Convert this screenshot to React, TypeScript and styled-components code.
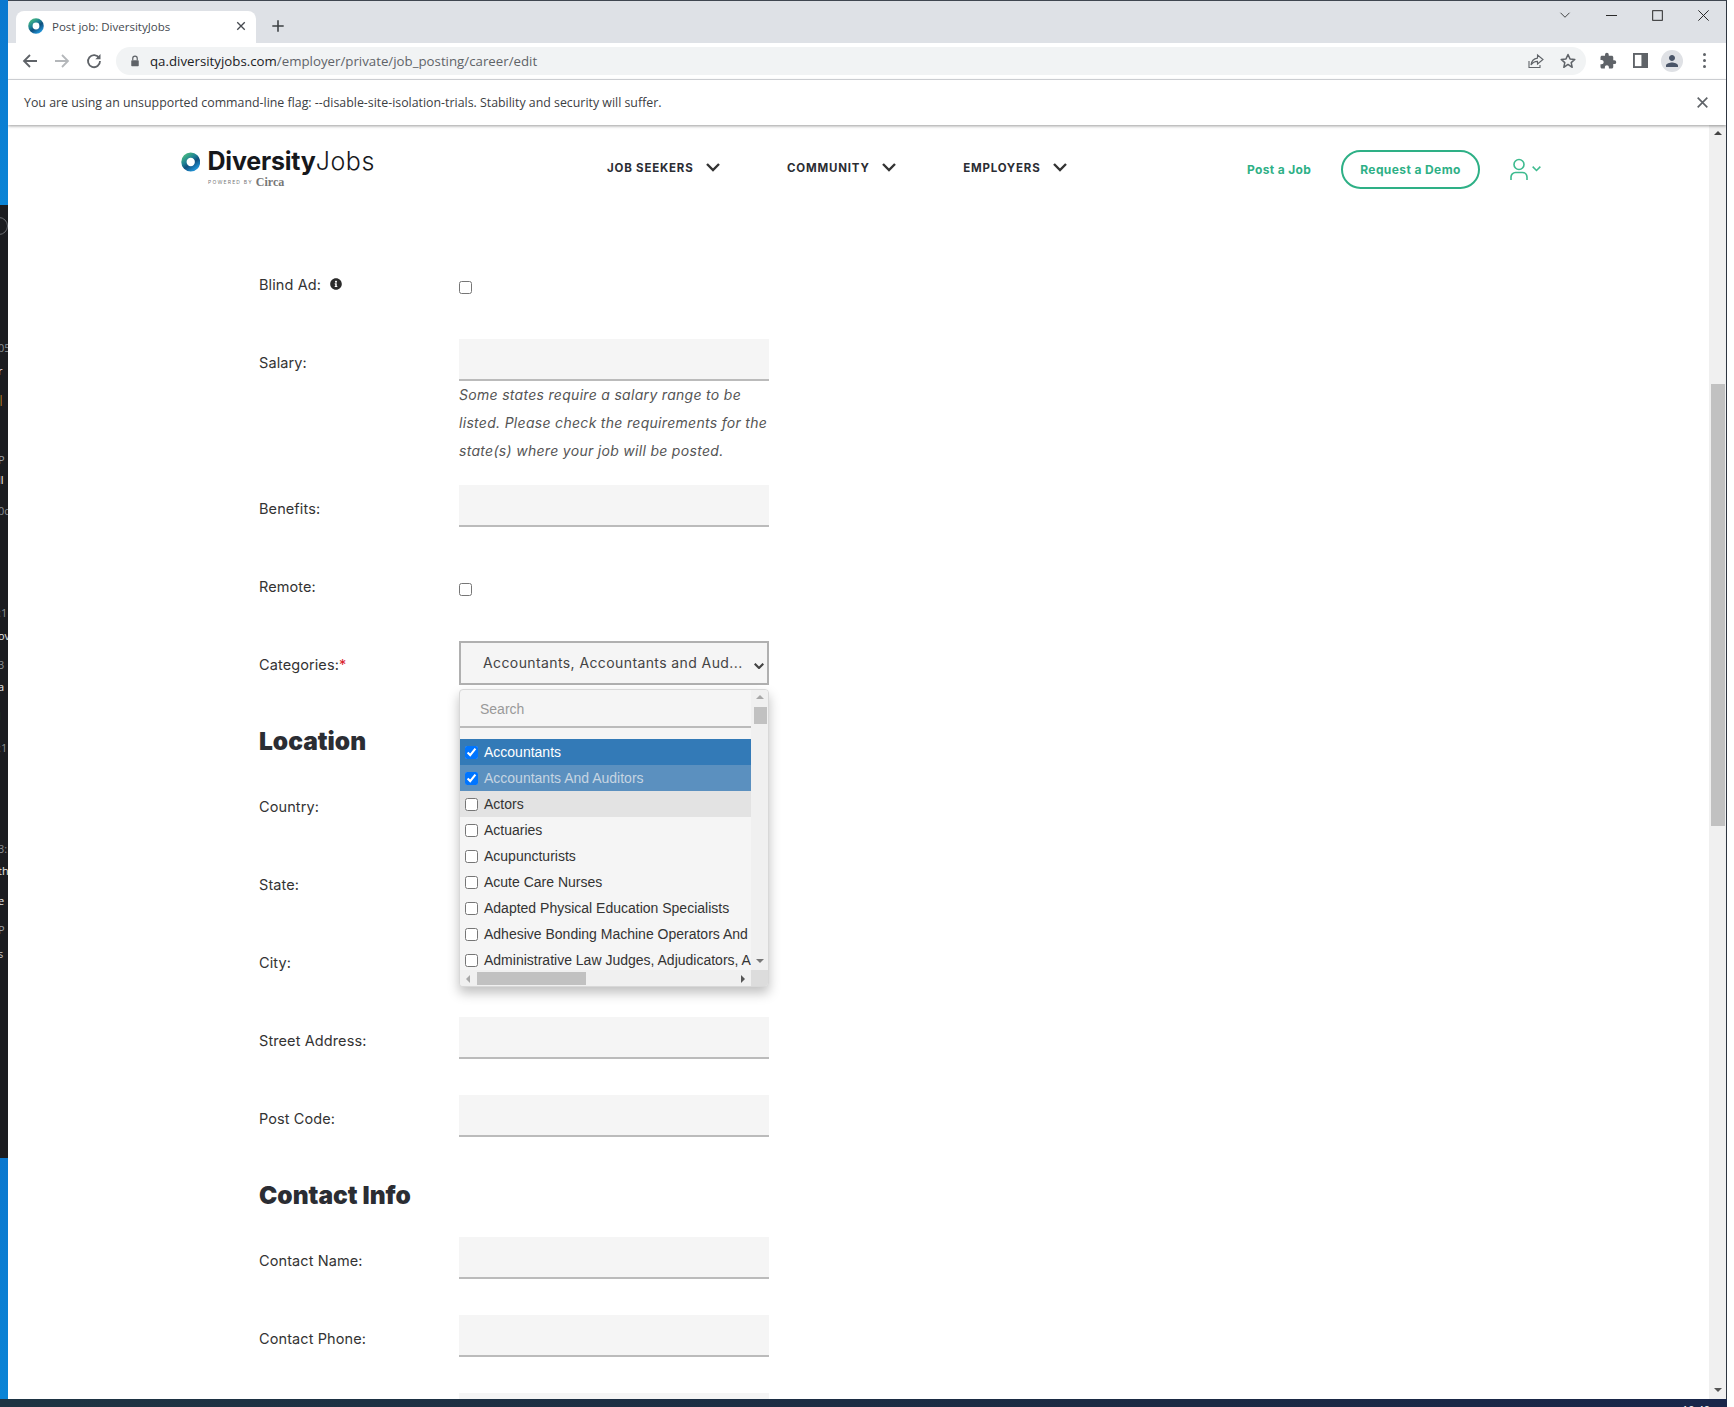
import styled, { createGlobalStyle } from "styled-components";
import { FaInfoCircle } from "react-icons/fa";
import { MdExtension, MdPerson } from "react-icons/md";

const GlobalStyle = createGlobalStyle`
  html, body {
    margin: 0;
    padding: 0;
    background: #fff;
  }
`;

const chromeFont = `"Open Sans", "Noto Sans", sans-serif`;
const pageFont = `Inter, "Open Sans", sans-serif`;
const listFont = `"Liberation Sans", Arial, sans-serif`;

const stripBits = [
  { text: "05", top: 107, color: "#8a8f94" },
  { text: "r", top: 11, color: "#e8e8e8" },
  { text: "|", top: 16, color: "#d29922" },
  { text: "P", top: 49, color: "#9aa0a6" },
  { text: "ll", top: 8, color: "#f0f0f0" },
  { text: "0c", top: 19, color: "#8a8f94" },
  { text: ":1", top: 90, color: "#8a8f94" },
  { text: "ov", top: 11, color: "#e8e8e8" },
  { text: "3", top: 17, color: "#8a8f94" },
  { text: "a", top: 10, color: "#e8e8e8" },
  { text: "l", top: 17, color: "#1f8fd0" },
  { text: ":1", top: 20, color: "#8a8f94" },
  { text: "3:", top: 89, color: "#8a8f94" },
  { text: "th", top: 10, color: "#e8e8e8" },
  { text: "e", top: 18, color: "#e8e8e8" },
  { text: "P", top: 17, color: "#9aa0a6" },
  { text: "s", top: 12, color: "#c8c8c8" },
];

const listItems = [
  { name: "Accountants", checked: true, tone: "active" },
  { name: "Accountants And Auditors", checked: true, tone: "selected" },
  { name: "Actors", checked: false, tone: "hover" },
  { name: "Actuaries", checked: false, tone: "plain" },
  { name: "Acupuncturists", checked: false, tone: "plain" },
  { name: "Acute Care Nurses", checked: false, tone: "plain" },
  { name: "Adapted Physical Education Specialists", checked: false, tone: "plain" },
  { name: "Adhesive Bonding Machine Operators And Tenders", checked: false, tone: "plain" },
  { name: "Administrative Law Judges, Adjudicators, And Hearing Officers", checked: false, tone: "plain" },
];

function LogoRing({ size }: { size: number }) {
  return (
    <svg width={size} height={size} viewBox="0 0 22 22">
      <defs>
        <linearGradient id={`ring${size}`} x1="0.15" y1="0" x2="0.85" y2="1">
          <stop offset="0" stopColor="#3fae84" />
          <stop offset="0.35" stopColor="#1d7f95" />
          <stop offset="0.6" stopColor="#0f4f7d" />
          <stop offset="1" stopColor="#1f8ed0" />
        </linearGradient>
      </defs>
      <circle cx="11" cy="11" r="7.7" fill="none" stroke={`url(#ring${size})`} strokeWidth="6" />
    </svg>
  );
}

function Chevron({ size = 14, color = "#333", width = 2.4 }: { size?: number; color?: string; width?: number }) {
  return (
    <svg width={size} height={size * 0.6} viewBox="0 0 14 8.4">
      <polyline points="1,1 7,7 13,1" fill="none" stroke={color} strokeWidth={width} />
    </svg>
  );
}

function ChromeIcon({ children, size = 16 }: { children: React.ReactNode; size?: number }) {
  return (
    <svg width={size} height={size} viewBox="0 0 16 16" fill="none">
      {children}
    </svg>
  );
}

function App() {
  return (
    <Desktop>
      <GlobalStyle />
      <LeftStrip>
        <StripBlue $height={205} />
        <StripDark>
          <StripCircle />
          {stripBits.map((bit, i) => (
            <StripText key={i} $top={bit.top} $color={bit.color}>
              {bit.text}
            </StripText>
          ))}
        </StripDark>
        <StripBlue $height={241} />
      </LeftStrip>

      <Window>
        <TabStrip>
          <Tab>
            <LogoRing size={16} />
            <TabTitle>Post job: DiversityJobs</TabTitle>
            <ChromeIcon size={12}>
              <path d="M3 3l10 10M13 3L3 13" stroke="#45494f" strokeWidth="1.8" />
            </ChromeIcon>
          </Tab>
          <NewTab>
            <ChromeIcon size={14}>
              <path d="M8 1.5v13M1.5 8h13" stroke="#3c4043" strokeWidth="1.8" />
            </ChromeIcon>
          </NewTab>
          <WindowControls>
            <WindowButton>
              <ChromeIcon size={12}>
                <path d="M2 5l6 6 6-6" stroke="#222" strokeWidth="1.1" />
              </ChromeIcon>
            </WindowButton>
            <WindowButton>
              <ChromeIcon size={11}>
                <path d="M0 8h16" stroke="#222" strokeWidth="1.4" />
              </ChromeIcon>
            </WindowButton>
            <WindowButton>
              <ChromeIcon size={11}>
                <rect x="1" y="1" width="14" height="14" stroke="#222" strokeWidth="1.4" />
              </ChromeIcon>
            </WindowButton>
            <WindowButton>
              <ChromeIcon size={11}>
                <path d="M0.5 0.5l15 15M15.5 0.5l-15 15" stroke="#222" strokeWidth="1.4" />
              </ChromeIcon>
            </WindowButton>
          </WindowControls>
        </TabStrip>

        <Toolbar>
          <ToolButton>
            <ChromeIcon>
              <path d="M15 8H2M8 2L2 8l6 6" stroke="#5f6368" strokeWidth="1.8" />
            </ChromeIcon>
          </ToolButton>
          <ToolButton>
            <ChromeIcon>
              <path d="M1 8h13M8 2l6 6-6 6" stroke="#b4b7ba" strokeWidth="1.8" />
            </ChromeIcon>
          </ToolButton>
          <ToolButton>
            <ChromeIcon>
              <path d="M13.2 5.2A6 6 0 1 0 14 8" stroke="#5f6368" strokeWidth="1.8" />
              <path d="M14.5 1v5.2H9.3z" fill="#5f6368" />
            </ChromeIcon>
          </ToolButton>
          <AddressBar>
            <ChromeIcon size={12}>
              <path d="M5 7V4.6a3 3 0 0 1 6 0V7" stroke="#5f6368" strokeWidth="1.6" />
              <rect x="3" y="7" width="10" height="8" rx="1" fill="#5f6368" />
            </ChromeIcon>
            <Url>
              qa.diversityjobs.com<UrlPath>/employer/private/job_posting/career/edit</UrlPath>
            </Url>
            <AddressIcons>
              <ToolButton>
                <ChromeIcon>
                  <path d="M1 8v6.5h11V12" stroke="#5f6368" strokeWidth="1.1" />
                  <path d="M9.5 2l5.5 4.5-5.5 4.5V8.4C6.5 8.4 4.5 9.6 3 12c.4-3.800 2.800-6.400 6.500-6.900z" stroke="#5f6368" strokeWidth="1.1" />
                </ChromeIcon>
              </ToolButton>
              <ToolButton>
                <ChromeIcon>
                  <path d="M8 1.500l2 4.400 4.800.5-3.600 3.200 1 4.700L8 11.400l-4.200 2.900 1-4.700L1.200 6.400 6 5.900z" stroke="#5f6368" strokeWidth="1.5" strokeLinejoin="round" />
                </ChromeIcon>
              </ToolButton>
            </AddressIcons>
          </AddressBar>
          <ExtensionIcons>
            <ToolButton>
              <MdExtension size={18} color="#5f6368" />
            </ToolButton>
            <ToolButton>
              <ChromeIcon size={15}>
                <rect x="1" y="1" width="14" height="14" stroke="#5f6368" strokeWidth="2" />
                <rect x="9" y="1" width="6" height="14" fill="#5f6368" />
              </ChromeIcon>
            </ToolButton>
            <ToolButton>
              <Avatar>
                <MdPerson size={18} color="#4a5568" />
              </Avatar>
            </ToolButton>
            <ToolButton>
              <MenuDots>
                <MenuDot />
                <MenuDot />
                <MenuDot />
              </MenuDots>
            </ToolButton>
          </ExtensionIcons>
        </Toolbar>

        <InfoBar>
          <InfoText>
            You are using an unsupported command-line flag: --disable-site-isolation-trials. Stability and security will suffer.
          </InfoText>
          <ChromeIcon size={11}>
            <path d="M1 1l14 14M15 1L1 15" stroke="#5f6368" strokeWidth="2.4" />
          </ChromeIcon>
        </InfoBar>

        <Viewport>
          <Page>
            <Header>
              <Logo>
                <LogoTop>
                  <LogoRing size={22} />
                  <LogoWord>
                    <b>Diversity</b>
                    <span>Jobs</span>
                  </LogoWord>
                </LogoTop>
                <LogoSub>
                  <PoweredBy>POWERED BY</PoweredBy>
                  <Circa>Circa</Circa>
                </LogoSub>
              </Logo>
              <Nav>
                <NavItem>
                  JOB SEEKERS <Chevron />
                </NavItem>
                <NavItem>
                  COMMUNITY <Chevron />
                </NavItem>
                <NavItem>
                  EMPLOYERS <Chevron />
                </NavItem>
              </Nav>
              <PostJob>Post a Job</PostJob>
              <DemoButton>Request a Demo</DemoButton>
              <UserMenu>
                <svg width="18" height="23" viewBox="0 0 18 23" fill="none">
                  <circle cx="9" cy="6.500" r="5" stroke="#3dbb8f" strokeWidth="1.600" />
                  <path d="M1 22v-3a4.500 4.500 0 0 1 4.500-4.500h7A4.500 4.500 0 0 1 17 19v3" stroke="#3dbb8f" strokeWidth="1.600" />
                </svg>
                <Chevron size={9} color="#3dbb8f" width={2.400} />
              </UserMenu>
            </Header>

            <Form>
              <Field>
                <Label>
                  Blind Ad: <FaInfoCircle size={12} color="#2b2b2b" style={{ marginLeft: 9 }} />
                </Label>
                <Check type="checkbox" />
              </Field>

              <Field $gap={20}>
                <Label>Salary:</Label>
                <div>
                  <TextInput />
                  <Help>
                    Some states require a salary range to be listed. Please check the requirements for the state(s) where your job will be posted.
                  </Help>
                </div>
              </Field>

              <Field>
                <Label>Benefits:</Label>
                <TextInput />
              </Field>

              <Field>
                <Label>Remote:</Label>
                <Check type="checkbox" />
              </Field>

              <Field $gap={0}>
                <Label>
                  Categories:<Required>*</Required>
                </Label>
                <SelectWrap>
                  <Select>
                    <SelectText>Accountants, Accountants and Aud...</SelectText>
                    <SelectChevron>
                      <Chevron size={10} color="#444" width={3} />
                    </SelectChevron>
                  </Select>
                  <Dropdown>
                    <ListPane>
                      <SearchRow>Search</SearchRow>
                      <ItemList>
                        {listItems.map((item) => (
                          <Item key={item.name} $tone={item.tone}>
                            <ItemCheck type="checkbox" checked={item.checked} readOnly />
                            {item.name}
                          </Item>
                        ))}
                      </ItemList>
                    </ListPane>
                    <VScroll>
                      <ArrowUp $color="#a8a8a8" $top={5} />
                      <VThumb />
                      <ArrowDown $color="#777" />
                    </VScroll>
                    <HScroll>
                      <ArrowLeft />
                      <HThumb />
                      <ArrowRight />
                    </HScroll>
                    <Corner />
                  </Dropdown>
                </SelectWrap>
              </Field>

              <SectionTitle>Location</SectionTitle>

              <Field>
                <Label>Country:</Label>
                <TextInput />
              </Field>
              <Field>
                <Label>State:</Label>
                <TextInput />
              </Field>
              <Field>
                <Label>City:</Label>
                <TextInput />
              </Field>
              <Field>
                <Label>Street Address:</Label>
                <TextInput />
              </Field>
              <Field $gap={0}>
                <Label>Post Code:</Label>
                <TextInput />
              </Field>

              <SectionTitle>Contact Info</SectionTitle>

              <Field>
                <Label>Contact Name:</Label>
                <TextInput />
              </Field>
              <Field>
                <Label>Contact Phone:</Label>
                <TextInput />
              </Field>
              <Field>
                <Label />
                <TextInput />
              </Field>
            </Form>
          </Page>

          <PageScroll>
            <ArrowUp $color="#444" $top={6} />
            <PageThumb />
            <PageArrowDown $color="#555" />
          </PageScroll>
        </Viewport>
      </Window>

      <Taskbar>
        <Clock>10:40</Clock>
      </Taskbar>
    </Desktop>
  );
}

const Desktop = styled.div`
  width: 1734px;
  height: 1407px;
  display: grid;
  grid-template-columns: 8px 1719px 7px;
  grid-template-rows: 1399px 8px;
  overflow: hidden;
  background: #fff;
`;

const LeftStrip = styled.div`
  display: flex;
  flex-direction: column;
  overflow: hidden;
`;

const StripBlue = styled.div<{ $height: number }>`
  flex: 0 0 ${(p) => p.$height}px;
  background: linear-gradient(#0a78cf, #0a84d6);
`;

const StripDark = styled.div`
  flex: 1;
  min-height: 0;
  background: #1b1c20;
  overflow: hidden;
  position: relative;
  font-family: ${chromeFont};
  font-size: 11px;
`;

const StripCircle = styled.div`
  width: 16px;
  height: 16px;
  margin: 12px 0 0 -10px;
  border: 1px solid #6a6d72;
  border-radius: 50%;
`;

const StripText = styled.div<{ $top: number; $color: string }>`
  margin-top: ${(p) => p.$top}px;
  margin-left: -2px;
  line-height: 12px;
  color: ${(p) => p.$color};
  white-space: nowrap;
`;

const Window = styled.div`
  display: flex;
  flex-direction: column;
  min-height: 0;
  border-top: 1px solid #3f4650;
  border-right: 1px solid #2e3540;
  background: #fff;
  overflow: hidden;
`;

const TabStrip = styled.div`
  flex: 0 0 42px;
  display: flex;
  background: #dee1e6;
  font-family: ${chromeFont};
`;

const Tab = styled.div`
  width: 240px;
  height: 32px;
  margin: 10px 0 0 8px;
  padding: 0 9px 2px 12px;
  box-sizing: border-box;
  display: flex;
  align-items: center;
  gap: 8px;
  background: #fff;
  border-radius: 8px 8px 0 0;
`;

const TabTitle = styled.span`
  flex: 1;
  font-size: 11.5px;
  color: #45494f;
  white-space: nowrap;
`;

const NewTab = styled.div`
  width: 44px;
  margin-top: 8px;
  display: flex;
  align-items: center;
  justify-content: center;
`;

const WindowControls = styled.div`
  margin-left: auto;
  height: 28px;
  display: flex;
`;

const WindowButton = styled.div`
  width: 46px;
  display: flex;
  align-items: center;
  justify-content: center;
`;

const Toolbar = styled.div`
  flex: 0 0 37px;
  box-sizing: border-box;
  display: flex;
  align-items: center;
  padding: 0 6px 1px 6px;
  background: #fff;
  border-bottom: 1px solid #dadce0;
`;

const ToolButton = styled.div`
  width: 32px;
  height: 28px;
  flex: none;
  display: flex;
  align-items: center;
  justify-content: center;
`;

const AddressBar = styled.div`
  flex: 1;
  height: 28px;
  margin: 0 6px;
  padding: 0 2px 0 13px;
  display: flex;
  align-items: center;
  background: #f1f3f4;
  border-radius: 14px;
  font-family: ${chromeFont};
`;

const Url = styled.div`
  flex: 1;
  margin-left: 9px;
  font-size: 13.27px;
  color: #202124;
  white-space: nowrap;
`;

const UrlPath = styled.span`
  color: #5f6368;
`;

const AddressIcons = styled.div`
  display: flex;
`;

const ExtensionIcons = styled.div`
  display: flex;
`;

const Avatar = styled.div`
  width: 22px;
  height: 22px;
  display: flex;
  align-items: center;
  justify-content: center;
  border-radius: 50%;
  background: #dfe1e5;
`;

const MenuDots = styled.div`
  display: flex;
  flex-direction: column;
  gap: 3px;
`;

const MenuDot = styled.div`
  width: 3px;
  height: 3px;
  border-radius: 50%;
  background: #5f6368;
`;

const InfoBar = styled.div`
  flex: 0 0 45px;
  box-sizing: border-box;
  display: flex;
  align-items: center;
  justify-content: space-between;
  padding: 0 18px 0 16px;
  background: #fff;
  box-shadow: 0 1px 3px rgba(0, 0, 0, 0.4);
  position: relative;
  z-index: 2;
`;

const InfoText = styled.span`
  font-family: ${chromeFont};
  font-size: 12.37px;
  color: #3c4043;
  white-space: nowrap;
`;

const Viewport = styled.div`
  flex: 1;
  min-height: 0;
  display: flex;
`;

const Page = styled.div`
  flex: 1;
  min-width: 0;
  overflow: hidden;
  font-family: ${pageFont};
  color: #333;
`;

const Header = styled.header`
  height: 88px;
  padding-left: 173px;
  display: flex;
  align-items: center;
`;

const Logo = styled.div`
  width: 194px;
  margin-top: -2px;
`;

const LogoTop = styled.div`
  display: flex;
  align-items: center;
  gap: 7px;
`;

const LogoWord = styled.div`
  margin-top: -3px;
  font-size: 25px;
  line-height: 22px;
  letter-spacing: -0.2px;
  color: #16181c;
  white-space: nowrap;
  b {
    font-weight: 700;
  }
  span {
    font-weight: 300;
    letter-spacing: 0.6px;
  }
`;

const LogoSub = styled.div`
  margin: 3px 0 -3px 27px;
  display: flex;
  align-items: center;
  gap: 3px;
  height: 12px;
`;

const PoweredBy = styled.span`
  font-size: 5px;
  letter-spacing: 1.2px;
  color: #777;
`;

const Circa = styled.span`
  font-family: "Liberation Serif", serif;
  font-size: 12px;
  font-weight: 700;
  color: #777;
`;

const Nav = styled.nav`
  margin-left: 232px;
  width: 640px;
  display: flex;
  gap: 67.5px;
  padding-bottom: 3px;
`;

const NavItem = styled.div`
  display: flex;
  align-items: center;
  gap: 12px;
  font-size: 11.5px;
  font-weight: 700;
  letter-spacing: 0.8px;
  color: #2b2d33;
  white-space: nowrap;
`;

const PostJob = styled.div`
  width: 94px;
  font-size: 12px;
  font-weight: 700;
  letter-spacing: 0.35px;
  color: #2eb086;
  white-space: nowrap;
`;

const DemoButton = styled.div`
  width: 139px;
  height: 39px;
  box-sizing: border-box;
  display: flex;
  align-items: center;
  justify-content: center;
  border: 2px solid #2eb086;
  border-radius: 20px;
  font-size: 12px;
  font-weight: 700;
  letter-spacing: 0.4px;
  color: #2eb086;
  white-space: nowrap;
`;

const UserMenu = styled.div`
  margin-left: 30px;
  display: flex;
  align-items: center;
  gap: 4px;
`;

const Form = styled.div`
  padding: 48px 0 0 251px;
`;

const Field = styled.div<{ $gap?: number }>`
  display: grid;
  grid-template-columns: 200px 310px;
  min-height: 42px;
  margin-bottom: ${(p) => (p.$gap === undefined ? 36 : p.$gap)}px;
`;

const Label = styled.label`
  display: flex;
  align-items: center;
  align-self: start;
  height: 20px;
  padding-top: 13px;
  font-size: 14.5px;
  letter-spacing: 0.1px;
  color: #333;
  white-space: nowrap;
`;

const Required = styled.span`
  color: #d9232e;
`;

const Check = styled.input`
  width: 13px;
  height: 13px;
  margin: 20px 0 0;
`;

const TextInput = styled.input`
  display: block;
  width: 310px;
  height: 42px;
  box-sizing: border-box;
  border: 0;
  border-bottom: 2px solid #bbb;
  background: #f5f5f5;
  padding: 0 10px;
`;

const Help = styled.div`
  font-size: 14px;
  font-style: italic;
  line-height: 28px;
  letter-spacing: 0.3px;
  color: #555;
`;

const SelectWrap = styled.div`
  position: relative;
  height: 42px;
`;

const Select = styled.div`
  width: 310px;
  height: 44px;
  box-sizing: border-box;
  padding: 0 3px 0 22px;
  display: flex;
  align-items: center;
  justify-content: space-between;
  border: 2px solid #b0b0b0;
  background: #f5f5f5;
`;

const SelectText = styled.span`
  margin-top: -1px;
  font-size: 14px;
  letter-spacing: 0.4px;
  color: #444;
  white-space: nowrap;
`;

const SelectChevron = styled.span`
  display: flex;
  margin-top: 5px;
`;

const Dropdown = styled.div`
  position: absolute;
  top: 48px;
  left: 0;
  z-index: 5;
  width: 310px;
  height: 298px;
  box-sizing: border-box;
  display: grid;
  grid-template-columns: 291px 18px;
  grid-template-rows: 280px 17px;
  border: 1px solid #d8d8d8;
  border-radius: 4px;
  background: #f5f5f5;
  box-shadow: 0 6px 12px rgba(0, 0, 0, 0.25);
  overflow: hidden;
  font-family: ${listFont};
`;

const ListPane = styled.div`
  overflow: hidden;
`;

const SearchRow = styled.div`
  height: 38px;
  box-sizing: border-box;
  margin-bottom: 11px;
  padding: 2px 0 0 20px;
  display: flex;
  align-items: center;
  border-bottom: 2px solid #bbb;
  font-size: 14px;
  color: #999;
`;

const ItemList = styled.div`
  display: flex;
  flex-direction: column;
`;

const itemBackgrounds: Record<string, string> = {
  active: "#337ab7",
  selected: "#5b90bf",
  hover: "#e3e3e3",
  plain: "transparent",
};

const itemColors: Record<string, string> = {
  active: "#fff",
  selected: "#c6d5e2",
  hover: "#333",
  plain: "#333",
};

const Item = styled.div<{ $tone: string }>`
  flex: 0 0 26px;
  display: flex;
  align-items: center;
  gap: 6px;
  padding-left: 5px;
  background: ${(p) => itemBackgrounds[p.$tone]};
  color: ${(p) => itemColors[p.$tone]};
  font-size: 14px;
  white-space: nowrap;
`;

const ItemCheck = styled.input`
  flex: none;
  width: 13px;
  height: 13px;
  margin: 0;
`;

const VScroll = styled.div`
  display: flex;
  flex-direction: column;
  align-items: center;
  background: #f0f0f0;
`;

const HScroll = styled.div`
  display: flex;
  align-items: center;
  background: #f0f0f0;
`;

const Corner = styled.div`
  background: #dcdcdc;
`;

const ArrowUp = styled.div<{ $color: string; $top: number }>`
  flex: none;
  width: 0;
  height: 0;
  margin-top: ${(p) => p.$top}px;
  border-left: 4px solid transparent;
  border-right: 4px solid transparent;
  border-bottom: 4px solid ${(p) => p.$color};
`;

const ArrowDown = styled.div<{ $color: string }>`
  flex: none;
  width: 0;
  height: 0;
  margin-top: 235px;
  border-left: 4px solid transparent;
  border-right: 4px solid transparent;
  border-top: 4px solid ${(p) => p.$color};
`;

const VThumb = styled.div`
  width: 13px;
  height: 17px;
  margin-top: 8px;
  background: #c1c1c1;
`;

const ArrowLeft = styled.div`
  width: 0;
  height: 0;
  margin-left: 6px;
  border-top: 4px solid transparent;
  border-bottom: 4px solid transparent;
  border-right: 4px solid #a8a8a8;
`;

const HThumb = styled.div`
  width: 109px;
  height: 13px;
  margin-left: 7px;
  background: #c1c1c1;
`;

const ArrowRight = styled.div`
  width: 0;
  height: 0;
  margin-left: auto;
  margin-right: 6px;
  border-top: 4px solid transparent;
  border-bottom: 4px solid transparent;
  border-left: 4px solid #555;
`;

const SectionTitle = styled.h2`
  height: 42px;
  margin: 37px 0 21px;
  display: flex;
  align-items: center;
  font-size: 24.5px;
  font-weight: 900;
  color: #2b2d33;
`;

const PageScroll = styled.div`
  flex: 0 0 17px;
  display: flex;
  flex-direction: column;
  align-items: center;
  background: #f0f0f0;
`;

const PageThumb = styled.div`
  width: 14px;
  height: 442px;
  margin-top: 249px;
  background: #c1c1c1;
`;

const PageArrowDown = styled(ArrowDown)`
  margin-top: auto;
  margin-bottom: 7px;
`;

const Taskbar = styled.div`
  grid-column: 1 / span 2;
  overflow: hidden;
  background: linear-gradient(90deg, #1e3443, #1b2a44 70%, #19264a);
  font-family: ${chromeFont};
`;

const Clock = styled.div`
  margin: 5px 0 0 1682px;
  font-size: 11px;
  line-height: 12px;
  color: #fff;
`;

export default App;
